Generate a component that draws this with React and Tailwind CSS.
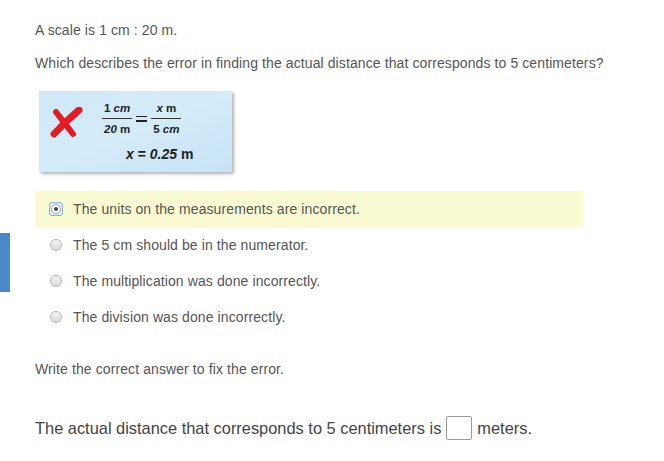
import React from 'react';

const OPTIONS = [
  'The units on the measurements are incorrect.',
  'The 5 cm should be in the numerator.',
  'The multiplication was done incorrectly.',
  'The division was done incorrectly.',
];

function Radio({ checked }) {
  if (checked) {
    return (
      <span className="w-[14px] h-[14px] rounded-[3px] border border-[#8fb4d8] bg-[#dfeaf5] flex items-center justify-center shrink-0">
        <span className="w-[10px] h-[10px] rounded-full border border-[#9aa] bg-white flex items-center justify-center">
          <span className="w-[4px] h-[4px] rounded-full bg-[#444]" />
        </span>
      </span>
    );
  }
  return (
    <span className="w-[12px] h-[12px] rounded-full border border-[#b5b5b5] bg-gradient-to-b from-[#f4f4f4] to-[#d8d8d8] shrink-0 mx-[1px]" />
  );
}

function Frac({ top, bottom }) {
  return (
    <span className="inline-flex flex-col items-center leading-none">
      <span className="px-[2px] pb-[3px]">{top}</span>
      <span className="self-stretch h-px bg-[#333]" />
      <span className="px-[2px] pt-[5px]">{bottom}</span>
    </span>
  );
}

export default function App() {
  return (
    <div className="relative w-[664px] h-[461px] bg-white text-[#555] font-['Liberation_Sans',Arial,sans-serif]">
      <div className="absolute left-0 top-[233px] w-[10px] h-[59px] bg-[#4a89c8]" />

      <div className="pl-[35px] pt-[22px] text-[14px] leading-[16px] tracking-[0.1px]">
        <p>A scale is 1 cm : 20 m.</p>
        <p className="mt-[17px]">Which describes the error in finding the actual distance that corresponds to 5 centimeters?</p>

        <div className="mt-[20px] ml-[4px] w-[193px] h-[81px] bg-gradient-to-br from-[#cfe8f8] via-[#d4ebf9] to-[#c6e3f6] shadow-[2px_2px_3px_rgba(0,0,0,0.3)] flex text-[#222] font-semibold text-[11.5px] tracking-normal">
          <svg width="34" height="32" viewBox="0 0 34 32" className="ml-[10px] mt-[16px] shrink-0">
            <path d="M7 5 L24 27" stroke="#e31b23" strokeWidth="6" fill="none" strokeLinecap="round" />
            <path d="M30 3 Q17 14 5 27" stroke="#e31b23" strokeWidth="7" fill="none" strokeLinecap="round" />
          </svg>
          <div className="ml-[19px] mt-[12px] flex flex-col">
            <div className="flex items-center gap-[4px]">
              <Frac top={<>1 <i>cm</i></>} bottom={<><i>20</i> m</>} />
              <span className="flex flex-col gap-[3px] w-[11px] -mt-[1px]">
                <span className="h-[1.5px] bg-[#222]" />
                <span className="h-[1.5px] bg-[#222]" />
              </span>
              <Frac top={<><i>x</i> m</>} bottom={<>5 <i>cm</i></>} />
            </div>
            <div className="mt-[12px] ml-[24px] text-[14px] leading-none">
              <i>x</i> = <i>0.25</i> m
            </div>
          </div>
        </div>

        <div className="mt-[19px] flex flex-col">
          {OPTIONS.map((o, i) => (
            <div
              key={o}
              className={`w-[548px] h-[36px] flex items-center gap-[10px] pl-[14px] ${i === 0 ? 'bg-[#fafad2]' : ''}`}
            >
              <Radio checked={i === 0} />
              <span>{o}</span>
            </div>
          ))}
        </div>

        <p className="mt-[26px]">Write the correct answer to fix the error.</p>

        <div className="mt-[39px] h-[24px] flex items-center text-[16.4px] text-[#444] tracking-normal">
          <span>The actual distance that corresponds to 5 centimeters is</span>
          <span className="inline-block w-[26px] h-[24px] border border-[#999] rounded-[2px] mx-[5px]" />
          <span>meters.</span>
        </div>
      </div>
    </div>
  );
}
